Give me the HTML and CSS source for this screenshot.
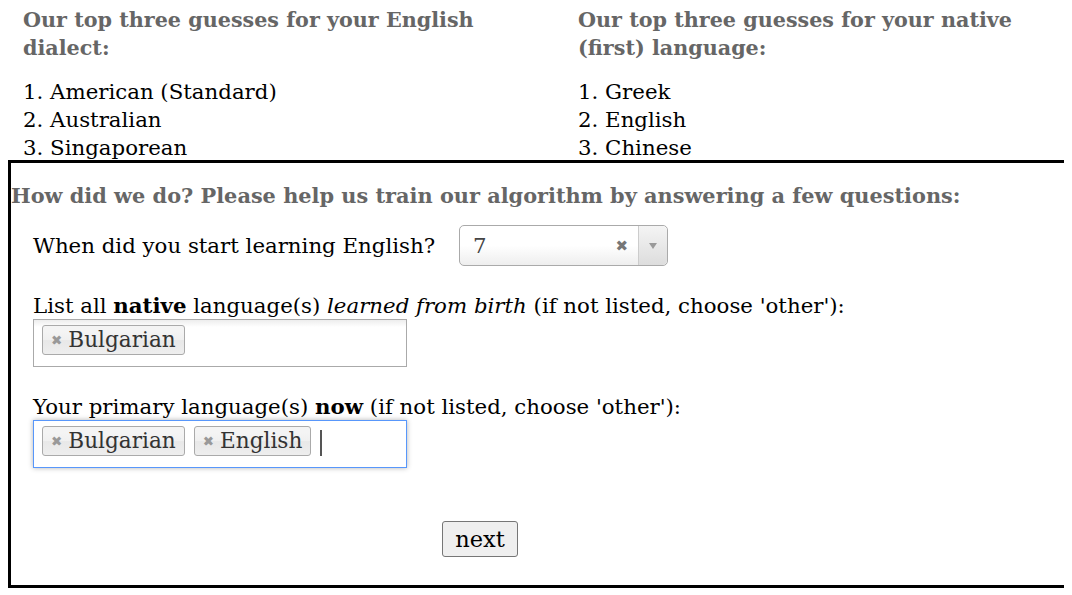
FILE: index.html
```html
<!DOCTYPE html>
<html>
<head>
<meta charset="utf-8">
<link rel="stylesheet" href="styles.css">
</head>
<body>
<div class="results">
  <div class="col">
    <h3 class="guess-title">Our top three guesses for your English dialect:</h3>
    <ol class="guess-list">
      <li>American (Standard)</li>
      <li>Australian</li>
      <li>Singaporean</li>
    </ol>
  </div>
  <div class="col">
    <h3 class="guess-title">Our top three guesses for your native (first) language:</h3>
    <ol class="guess-list">
      <li>Greek</li>
      <li>English</li>
      <li>Chinese</li>
    </ol>
  </div>
</div>
<div class="survey">
  <h3 class="survey-title">How did we do? Please help us train our algorithm by answering a few questions:</h3>
  <div class="q q-age">
    <span class="q-label">When did you start learning English?</span>
    <div class="single-select">
      <span class="ss-value">7</span>
      <span class="ss-clear">&#x2716;</span>
      <span class="ss-arrow"><span class="tri"></span></span>
    </div>
  </div>
  <div class="q q-native">
    <div class="q-label">List all <b>native</b> language(s) <i>learned from birth</i> (if not listed, choose 'other'):</div>
    <div class="multi">
      <span class="tag"><span class="tag-x">&#x2716;</span>Bulgarian</span>
    </div>
  </div>
  <div class="q q-now">
    <div class="q-label">Your primary language(s) <b>now</b> (if not listed, choose 'other'):</div>
    <div class="multi focused">
      <span class="tag"><span class="tag-x">&#x2716;</span>Bulgarian</span>
      <span class="tag"><span class="tag-x">&#x2716;</span>English</span>
      <span class="caret"></span>
    </div>
  </div>
  <div class="actions">
    <button class="next">next</button>
  </div>
</div>
</body>
</html>
```
FILE: styles.css
```css
html {
  overflow: hidden;
  scrollbar-width: none;
}
body {
  margin: 8px 8px 0 8px;
  font-family: "DejaVu Serif", serif;
  color: #000;
  background: #fff;
}
.results {
  display: grid;
  grid-template-columns: 555px 480px;
  padding-left: 15px;
  margin-top: -2px;
}
.col { width: 480px; }
.guess-title {
  margin: 0;
  font-size: 20.7px;
  line-height: 28px;
  font-weight: bold;
  color: #666;
}
.guess-list {
  margin: 16px 0 0 0;
  padding: 0;
  list-style: decimal inside;
  font-size: 21.3px;
  line-height: 28px;
}
.survey {
  border: 3px solid #000;
  border-right: none;
  margin-right: -8px;
  margin-top: -2px;
  padding-bottom: 28px;
}
.survey-title {
  margin: 19px 0 0 0;
  font-size: 20.85px;
  line-height: 28px;
  color: #666;
  font-weight: bold;
}
.q {
  padding-left: 22px;
  font-size: 21.3px;
  line-height: 28px;
}
.q-age {
  display: flex;
  align-items: center;
  gap: 24px;
  margin-top: 15px;
}
.single-select {
  width: 207px;
  height: 39px;
  border: 1px solid #aaa;
  border-radius: 5px;
  background: linear-gradient(#fff 0%, #fff 50%, #eee 100%);
  display: flex;
  align-items: center;
  color: #444;
}
.ss-value { flex: 1; padding-left: 13px; }
.ss-clear {
  font-size: 15px;
  font-weight: bold;
  color: #777;
  margin-right: 10px;
  font-family: "DejaVu Sans", sans-serif;
}
.ss-arrow {
  width: 28px;
  height: 100%;
  border-left: 1px solid #ccc;
  background: linear-gradient(#f4f4f4, #ddd);
  display: flex;
  align-items: center;
  justify-content: center;
  border-radius: 0 5px 5px 0;
}
.tri {
  width: 0; height: 0;
  border-left: 4px solid transparent;
  border-right: 4px solid transparent;
  border-top: 6px solid #999;
}
.q-native { margin-top: 26px; }
.q-now { margin-top: 26px; }
.multi {
  width: 374px;
  height: 48px;
  margin-top: -1px;
  border: 1px solid #aaa;
  display: flex;
  align-items: flex-start;
  gap: 9px;
  padding: 5px 8px 0 8px;
  box-sizing: border-box;
  background: linear-gradient(#eee 1%, #fff 15%);
}
.multi.focused {
  border-color: #5897fb;
  box-shadow: 0 0 5px rgba(0,0,0,.3);
  background: #fff;
}
.tag {
  display: inline-flex;
  align-items: center;
  height: 30px;
  box-sizing: border-box;
  padding: 0 8px 0 8px;
  border: 1px solid #aaa;
  border-radius: 3px;
  background: linear-gradient(#f4f4f4 20%, #f0f0f0 50%, #e8e8e8 52%, #eee 100%);
  color: #333;
  font-size: 21.6px;
}
.tag-x {
  font-size: 13.5px;
  font-weight: bold;
  color: #999;
  margin-right: 6px;
  font-family: "DejaVu Sans", sans-serif;
}
.caret {
  width: 2px;
  height: 26px;
  margin-top: 4px;
  background: #555;
}
.actions {
  width: 938px;
  display: flex;
  justify-content: center;
  margin-top: 53px;
}
.next {
  font-family: "DejaVu Serif", serif;
  font-size: 22.5px;
  height: 36px;
  padding: 0 12px;
  background: #efefef;
  border: 1px solid #767676;
  border-radius: 3px;
  color: #000;
}
```
